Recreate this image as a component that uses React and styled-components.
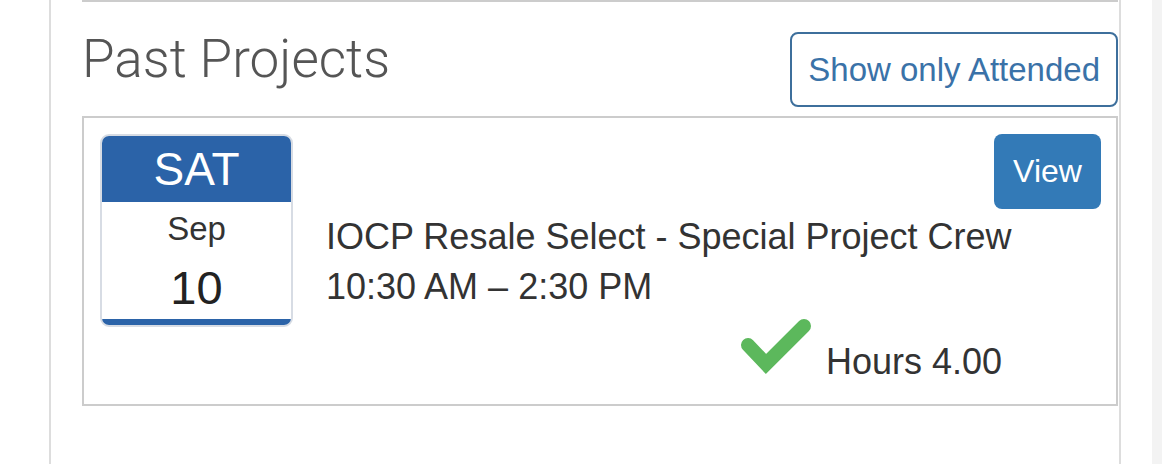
import React from 'react';
import styled, { createGlobalStyle } from 'styled-components';

const GlobalStyle = createGlobalStyle`
  html, body {
    margin: 0;
    padding: 0;
    background: #fff;
  }
  body {
    font-family: "Liberation Sans", Arial, Helvetica, sans-serif;
    color: #333;
  }
`;

const Page = styled.div`
  display: flex;
  height: 464px;
  overflow: hidden;
  background: #fff;
`;

const Gutter = styled.div`
  width: 49px;
  flex: none;
`;

const Column = styled.main`
  width: 1036px;
  flex: none;
  padding: 0 1px 0 31px;
  border-left: 2px solid #ddd;
  border-right: 2px solid #ddd;
`;

// imitation of the scrollbar track on the right
const Track = styled.div`
  width: 10px;
  margin-left: 31px;
  flex: none;
  background: #f3f3f3;
`;

const Divider = styled.hr`
  margin: 0;
  border: 0;
  border-top: 2px solid #ccc;
`;

const SectionHeader = styled.div`
  display: flex;
  justify-content: space-between;
  align-items: flex-start;
`;

const Heading = styled.h2`
  margin: 25px 0 0;
  font-family: Roboto, "Liberation Sans", sans-serif;
  font-weight: 300;
  font-size: 53px;
  line-height: 64px;
  color: #555;
`;

const OutlineButton = styled.button`
  margin-top: 30px;
  height: 75px;
  padding: 0 16px;
  border: 2px solid #3d6f9c;
  border-radius: 8px;
  background: #fff;
  color: #3a72a8;
  font-family: "Liberation Sans", Arial, sans-serif;
  font-size: 33px;
  cursor: pointer;
`;

const Card = styled.article`
  margin-top: 9px;
  display: flex;
  gap: 33px;
  padding: 16px 15px 24px 16px;
  border: 2px solid #ccc;
`;

const DateBox = styled.div`
  width: 189px;
  height: 189px;
  flex: none;
  display: flex;
  flex-direction: column;
  border: 2px solid #d7dce4;
  border-radius: 9px;
  overflow: hidden;
  text-align: center;
`;

const Weekday = styled.div`
  height: 66px;
  line-height: 66px;
  background: #2b63a8;
  color: #fff;
  font-size: 46px;
`;

const Month = styled.div`
  height: 48px;
  line-height: 54px;
  font-size: 33px;
  color: #333;
`;

const Day = styled.div`
  flex: 1;
  padding-top: 7px;
  line-height: 62px;
  font-size: 47px;
  color: #222;
  border-bottom: 6px solid #2b63a8;
`;

const Details = styled.div`
  flex: 1;
  display: flex;
  flex-direction: column;
`;

const ActionRow = styled.div`
  display: flex;
  justify-content: flex-end;
`;

const SolidButton = styled.button`
  width: 107px;
  height: 75px;
  border: 0;
  border-radius: 8px;
  background: #337ab7;
  color: #fff;
  font-family: "Liberation Sans", Arial, sans-serif;
  font-size: 32px;
  cursor: pointer;
`;

const Info = styled.div`
  margin-top: 3px;
  font-size: 36px;
  line-height: 50px;
  color: #333;
`;

const HoursRow = styled.div`
  margin-top: 3px;
  padding-left: 411px;
  display: flex;
  align-items: flex-end;
  gap: 13px;
`;

const Hours = styled.span`
  font-size: 36px;
  line-height: 36px;
  color: #333;
`;

const Check = () => (
  <svg width="76" height="65" viewBox="0 0 76 65">
    <polyline
      points="11,30 29,49 67,11"
      fill="none"
      stroke="#5cb85c"
      strokeWidth="14"
      strokeLinecap="round"
      strokeLinejoin="miter"
    />
  </svg>
);

const project = {
  weekday: 'SAT',
  month: 'Sep',
  day: '10',
  title: 'IOCP Resale Select - Special Project Crew',
  time: '10:30 AM \u2013 2:30 PM',
  hours: '4.00',
};

export default function App() {
  return (
    <>
      <GlobalStyle />
      <Page>
        <Gutter />
        <Column>
          <Divider />
          <SectionHeader>
            <Heading>Past Projects</Heading>
            <OutlineButton>Show only Attended</OutlineButton>
          </SectionHeader>
          <Card>
            <DateBox>
              <Weekday>{project.weekday}</Weekday>
              <Month>{project.month}</Month>
              <Day>{project.day}</Day>
            </DateBox>
            <Details>
              <ActionRow>
                <SolidButton>View</SolidButton>
              </ActionRow>
              <Info>
                <div>{project.title}</div>
                <div>{project.time}</div>
              </Info>
              <HoursRow>
                <Check />
                <Hours>Hours {project.hours}</Hours>
              </HoursRow>
            </Details>
          </Card>
        </Column>
        <Track />
      </Page>
    </>
  );
}
